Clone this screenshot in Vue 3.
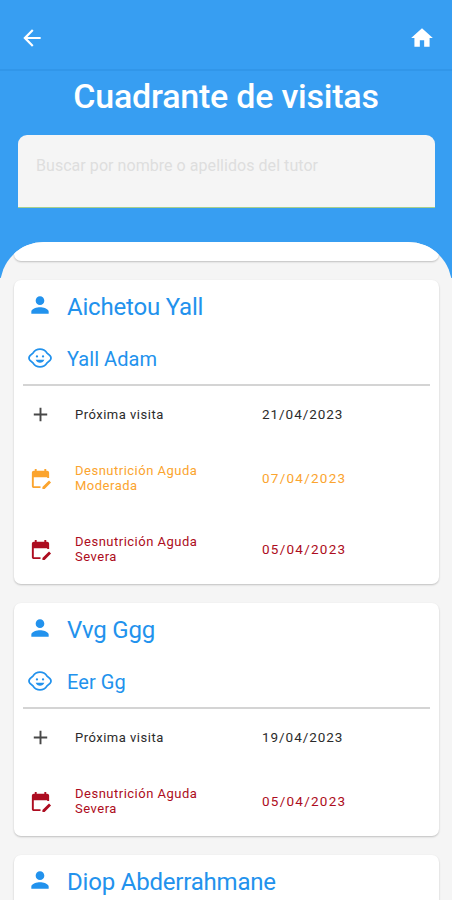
<script setup>
const paths = {
  back: 'M20 11H7.83l5.59-5.59L12 4l-8 8 8 8 1.41-1.41L7.83 13H20v-2z',
  home: 'M10 20v-6h4v6h5v-8h3L12 3 2 12h3v8z',
  person: 'M12 12c2.21 0 4-1.79 4-4s-1.79-4-4-4-4 1.79-4 4 1.79 4 4 4zm0 2c-2.67 0-8 1.34-8 4v2h16v-2c0-2.66-5.33-4-8-4z',
  plus: 'M19 13h-6v6h-2v-6H5v-2h6V5h2v6h6v2z',
  calendar: 'M12 22H5c-1.11 0-2-.9-2-2V6c0-1.1.9-2 2-2h1V2h2v2h8V2h2v2h1c1.1 0 2 .9 2 2v5.5h-2V10.6H5V20h7v2z M23 16.2L16.3 23H14v-2.1l6.9-6.7z',
}

const next = (date) => ({ kind: 'next', icon: 'plus', lines: ['Próxima visita'], date })
const moderate = (date) => ({ kind: 'moderate', icon: 'calendar', lines: ['Desnutrición Aguda', 'Moderada'], date })
const severe = (date) => ({ kind: 'severe', icon: 'calendar', lines: ['Desnutrición Aguda', 'Severa'], date })

const tutors = [
  { name: 'Aichetou Yall', child: 'Yall Adam', visits: [next('21/04/2023'), moderate('07/04/2023'), severe('05/04/2023')] },
  { name: 'Vvg Ggg', child: 'Eer Gg', visits: [next('19/04/2023'), severe('05/04/2023')] },
  { name: 'Diop Abderrahmane', child: '', visits: [] },
]
</script>

<template>
  <div class="screen">
    <header class="bar">
      <svg class="icon-lg" viewBox="0 0 24 24"><path :d="paths.back" /></svg>
      <svg class="icon-lg" viewBox="0 0 24 24"><path :d="paths.home" /></svg>
    </header>
    <h1 class="title">Cuadrante de visitas</h1>
    <div class="search"><span>Buscar por nombre o apellidos del tutor</span></div>
    <main class="panel">
      <div class="card previous"></div>
      <section v-for="t in tutors" :key="t.name" class="card">
        <div class="row tutor">
          <svg class="icon-lg" viewBox="0 0 24 24"><path :d="paths.person" /></svg>
          <h2>{{ t.name }}</h2>
        </div>
        <template v-if="t.child">
          <div class="row child">
            <svg class="icon-lg" viewBox="0 0 24 24">
              <path class="outline" d="M12 3.9c2.6 0 4.8 1.100 6.300 3.300l2.900 2.600q1.900 2.200 0 4.400l-2.900 2.600c-1.500 2.200-3.700 3.300-6.300 3.300s-4.800-1.100-6.300-3.300l-2.900-2.600q-1.900-2.200 0-4.400l2.900-2.600c1.500-2.200 3.700-3.300 6.300-3.300z" />
              <circle cx="9.200" cy="10.500" r="1.050" />
              <circle cx="14.800" cy="10.500" r="1.050" />
              <path d="M8 13.600h8c-.7 1.800-2.200 2.700-4 2.700s-3.300-.9-4-2.700z" />
            </svg>
            <h3>{{ t.child }}</h3>
          </div>
          <div class="rule"></div>
        </template>
        <div v-for="v in t.visits" :key="v.kind" class="visit" :class="v.kind">
          <svg class="icon-sm" viewBox="0 0 24 24"><path :d="paths[v.icon]" /></svg>
          <div class="label"><div v-for="l in v.lines" :key="l">{{ l }}</div></div>
          <div class="date">{{ v.date }}</div>
        </div>
      </section>
    </main>
  </div>
</template>

<style>
body {
  margin: 0;
  overflow: hidden;
}
</style>

<style scoped>
.screen {
  width: 452px;
  height: 900px;
  overflow: hidden;
  display: flex;
  flex-direction: column;
  background: linear-gradient(#379ef2 278px, #f5f5f5 278px);
  font-family: Roboto, "Liberation Sans", sans-serif;
}
svg {
  display: block;
  flex: none;
  fill: currentColor;
}
.outline {
  fill: none;
  stroke: currentColor;
  stroke-width: 1.6;
}
.icon-lg {
  width: 26px;
  height: 26px;
}
.icon-sm {
  width: 23px;
  height: 23px;
}
.bar {
  box-sizing: border-box;
  flex: none;
  height: 71px;
  padding: 7px 17px 0 19px;
  display: flex;
  align-items: center;
  justify-content: space-between;
  color: #fff;
  border-bottom: 2px solid #3196e9;
}
.title {
  flex: none;
  margin: 0;
  height: 64px;
  line-height: 50px;
  text-align: center;
  white-space: nowrap;
  color: #fff;
  font-size: 34px;
  font-weight: 500;
  letter-spacing: -0.22px;
}
.search {
  box-sizing: border-box;
  flex: none;
  height: 73px;
  margin: 0 17px 0 18px;
  padding: 20px 18px;
  background: #f5f5f5;
  border-bottom: 1px solid #a5cf8c;
  border-radius: 9px 9px 0 0;
  color: #dedede;
  font-size: 16px;
  letter-spacing: 0.05px;
  line-height: 22px;
  white-space: nowrap;
}
.panel {
  box-sizing: border-box;
  flex: none;
  height: 658px;
  margin-top: 34px;
  padding: 0 13px 0 14px;
  overflow: hidden;
  display: flex;
  flex-direction: column;
  gap: 18px;
  background: #f5f5f5;
  border-radius: 44px 44px 0 0;
}
.card {
  box-sizing: border-box;
  flex: none;
  background: #fff;
  border-radius: 7px;
  box-shadow: 0 1px 2px #00000038;
}
.card:not(:last-child) {
  margin-bottom: 1px;
}
.card.previous {
  height: 19px;
  border-radius: 0 0 7px 7px;
}
.row {
  display: flex;
  align-items: center;
  gap: 14px;
  padding-left: 13px;
  color: #2292ed;
}
.tutor {
  height: 53px;
}
.tutor svg {
  margin-bottom: 3px;
}
.child {
  height: 51px;
}
.child svg {
  margin-bottom: 1px;
}
h2,
h3 {
  margin: 0;
  font-weight: 400;
  white-space: nowrap;
}
h2 {
  font-size: 24px;
  letter-spacing: -0.2px;
}
h3 {
  font-size: 20px;
  letter-spacing: 0.05px;
}
.rule {
  height: 2px;
  margin: 0 9px;
  background: #d4d4d4;
}
.visit {
  box-sizing: border-box;
  height: 71px;
  padding: 1px 0 0 15px;
  display: grid;
  grid-template-columns: 46px 187px 1fr;
  align-items: center;
  font-size: 13px;
  line-height: 15px;
  letter-spacing: 0.5px;
}
.next {
  height: 56px;
  color: #2b2b2b;
}
.next svg {
  fill: #484848;
}
.moderate {
  color: #fba42e;
}
.severe {
  color: #ad0c20;
}
.date {
  font-size: 13.5px;
  letter-spacing: 1.25px;
}
.next .date {
  letter-spacing: 0.95px;
}
</style>
